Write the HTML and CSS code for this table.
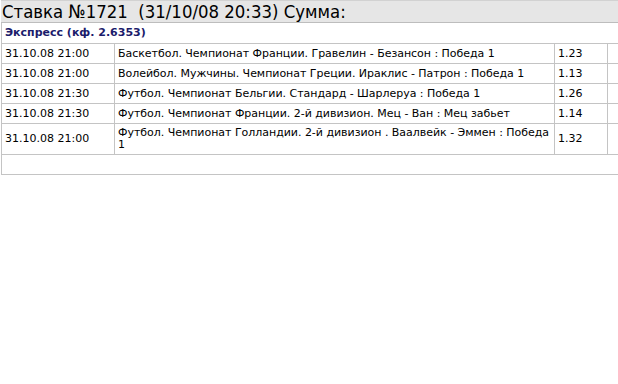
FILE: index.html
```html
<!DOCTYPE html>
<html>
<head>
<meta charset="utf-8">
<link rel="stylesheet" href="styles.css">
</head>
<body>
<div class="page">
  <div class="title">Ставка №1721&nbsp;&nbsp;(31/10/08 20:33) Сумма:</div>
  <div class="express">Экспресс (кф. 2.6353)</div>
  <table class="bets">
    <colgroup>
      <col class="c-date"><col class="c-desc"><col class="c-coef"><col class="c-extra">
    </colgroup>
    <tr><td>31.10.08 21:00</td><td class="desc">Баскетбол. Чемпионат Франции. Гравелин - Безансон : Победа 1</td><td>1.23</td><td></td></tr>
    <tr><td>31.10.08 21:00</td><td class="desc">Волейбол. Мужчины. Чемпионат Греции. Ираклис - Патрон : Победа 1</td><td>1.13</td><td></td></tr>
    <tr><td>31.10.08 21:30</td><td class="desc">Футбол. Чемпионат Бельгии. Стандард - Шарлеруа : Победа 1</td><td>1.26</td><td></td></tr>
    <tr><td>31.10.08 21:30</td><td class="desc">Футбол. Чемпионат Франции. 2-й дивизион. Мец - Ван : Мец забьет</td><td>1.14</td><td></td></tr>
    <tr><td>31.10.08 21:00</td><td class="desc">Футбол. Чемпионат Голландии. 2-й дивизион . Ваалвейк - Эммен : Победа 1</td><td>1.32</td><td></td></tr>
    <tr class="empty"><td colspan="4"></td></tr>
  </table>
</div>
</body>
</html>
```

FILE: styles.css
```css
html, body {
  margin: 0;
  padding: 0;
  background: #ffffff;
  overflow: hidden;
}
.page {
  width: 680px;
  margin-left: 1px;
  font-family: "DejaVu Sans", sans-serif;
  color: #000;
}
.title {
  background: #e6e6e6;
  border-top: 1px solid #d2d2d2;
  border-bottom: 1px solid #bdbdbd;
  height: 21px;
  line-height: 21px;
  font-size: 18.4px;
  padding-left: 1px;
  white-space: nowrap;
  font-family: "DejaVu Sans Condensed", "DejaVu Sans", sans-serif;
}
.express {
  border-left: 1px solid #c4c4c4;
  height: 20px;
  line-height: 20px;
  font-size: 11px;
  font-weight: bold;
  color: #1b1b6b;
  padding-left: 3px;
}
.bets {
  border-collapse: collapse;
  width: 680px;
  font-size: 11px;
  table-layout: fixed;
}
.bets td {
  border: 1px solid #c4c4c4;
  height: 13px;
  padding: 3px 3px;
  vertical-align: middle;
  line-height: 12px;
}
.bets td.desc {
  padding-right: 0;
  letter-spacing: -0.03px;
}
.c-date { width: 113px; }
.c-desc { width: 440px; }
.c-coef { width: 53px; }
.c-extra { width: 74px; }
```
